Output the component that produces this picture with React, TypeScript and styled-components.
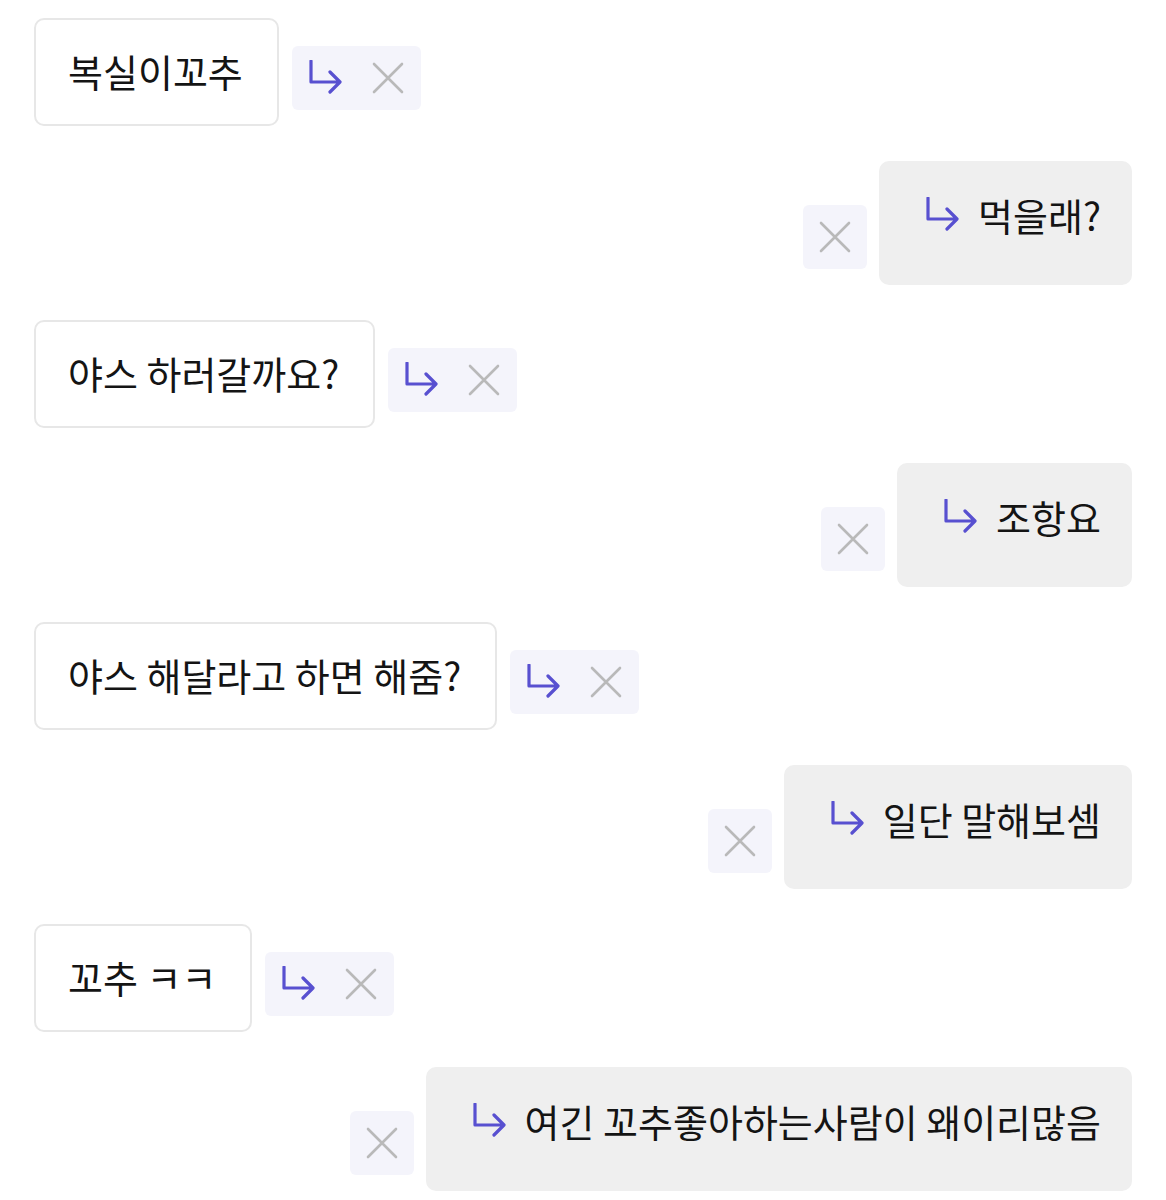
import React from "react";
import styled, { createGlobalStyle } from "styled-components";

const GlobalStyle = createGlobalStyle`
  html, body {
    margin: 0;
    padding: 0;
    background: #ffffff;
  }
  body {
    font-family: "Noto Sans CJK KR", "Noto Sans", sans-serif;
    color: #141414;
  }
`;

const Page = styled.div`
  display: flex;
  flex-direction: column;
  gap: 35px;
  padding: 18px 34px 20px;
`;

const Row = styled.div<{ $mine?: boolean }>`
  display: flex;
  align-items: flex-end;
  justify-content: ${(p) => (p.$mine ? "flex-end" : "flex-start")};
  gap: ${(p) => (p.$mine ? "12px" : "13px")};
`;

const LeftBubble = styled.div`
  box-sizing: border-box;
  height: 108px;
  padding: 29px 34px 31px 32px;
  border: 2px solid #e7e7e7;
  border-radius: 10px;
  background: #ffffff;
  font-size: 38px;
  line-height: 44px;
  white-space: nowrap;
`;

const RightBubble = styled.div`
  box-sizing: border-box;
  height: 124px;
  padding: 32px 31px 48px 46px;
  border-radius: 10px;
  background: #efefef;
  display: flex;
  align-items: center;
  gap: 19px;
  font-size: 38px;
  line-height: 44px;
  white-space: nowrap;
`;

const ActionBox = styled.div<{ $single?: boolean }>`
  box-sizing: border-box;
  height: 64px;
  margin-bottom: 16px;
  padding: ${(p) => (p.$single ? "0 15px" : "0 16px")};
  display: flex;
  align-items: center;
  gap: 29px;
  background: #f4f4fb;
  border-radius: 6px;
`;

const IconSvg = styled.svg`
  display: block;
  flex: none;
`;

const ReplyIcon = () => (
  <IconSvg width="34" height="36" viewBox="0 0 34 36" fill="none">
    <path
      d="M3 1 V22 H31 M22 12 L32 22 L22 32"
      stroke="#5850d0"
      strokeWidth="3.2"
      strokeLinecap="round"
      strokeLinejoin="round"
    />
  </IconSvg>
);

const CloseIcon = () => (
  <IconSvg width="34" height="34" viewBox="0 0 34 34" fill="none">
    <path
      d="M3 3 L31 31 M31 3 L3 31"
      stroke="#b9b9b9"
      strokeWidth="2.6"
      strokeLinecap="round"
    />
  </IconSvg>
);

type Msg = { text: string; mine: boolean };

const messages: Msg[] = [
  { text: "복실이꼬추", mine: false },
  { text: "먹을래?", mine: true },
  { text: "야스 하러갈까요?", mine: false },
  { text: "조항요", mine: true },
  { text: "야스 해달라고 하면 해줌?", mine: false },
  { text: "일단 말해보셈", mine: true },
  { text: "꼬추 ㅋㅋ", mine: false },
  { text: "여긴 꼬추좋아하는사람이 왜이리많음", mine: true },
];

export default function App() {
  return (
    <>
      <GlobalStyle />
      <Page>
        {messages.map((m, i) =>
          m.mine ? (
            <Row key={i} $mine>
              <ActionBox $single>
                <CloseIcon />
              </ActionBox>
              <RightBubble>
                <ReplyIcon />
                <span>{m.text}</span>
              </RightBubble>
            </Row>
          ) : (
            <Row key={i}>
              <LeftBubble>{m.text}</LeftBubble>
              <ActionBox>
                <ReplyIcon />
                <CloseIcon />
              </ActionBox>
            </Row>
          )
        )}
      </Page>
    </>
  );
}
